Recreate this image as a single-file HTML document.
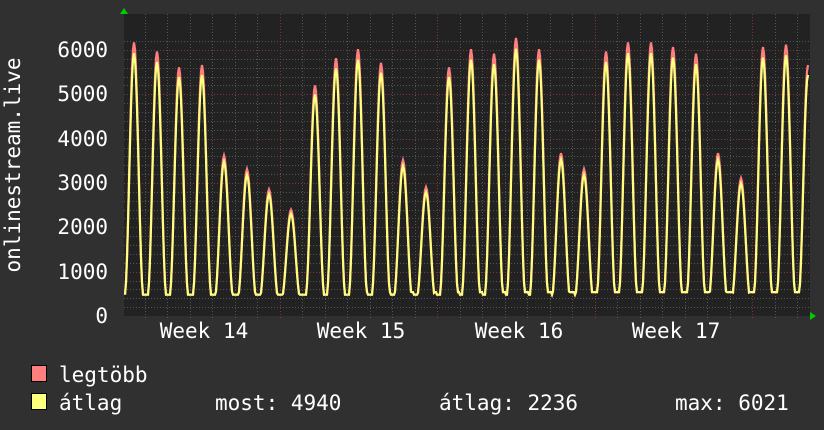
<!DOCTYPE html>
<html><head><meta charset="utf-8"><style>
html,body{margin:0;padding:0;background:#303030;}
svg{display:block}
text{font-family:"DejaVu Sans Mono","Liberation Mono",monospace;font-size:21px;fill:#fff}
</style></head><body>
<svg id="s" width="824" height="430" xmlns="http://www.w3.org/2000/svg">
<rect width="824" height="430" fill="#303030"/>
<rect x="124" y="14" width="686" height="302" fill="#222"/>
<g id="grid"></g>
<g id="lines"></g>
<polygon points="120,14 128,14 124,8" fill="#0c0"/>
<polygon points="810,312 810,320 816,316" fill="#0c0"/>
<g text-anchor="end">
<text x="108" y="57">6000</text>
<text x="108" y="101">5000</text>
<text x="108" y="146">4000</text>
<text x="108" y="190">3000</text>
<text x="108" y="234">2000</text>
<text x="108" y="279">1000</text>
<text x="108" y="323">0</text>
</g>
<text transform="translate(20,165) rotate(-90)" text-anchor="middle">onlinestream.live</text>
<g text-anchor="middle">
<text x="204" y="338">Week 14</text>
<text x="361" y="338">Week 15</text>
<text x="519" y="338">Week 16</text>
<text x="676" y="338">Week 17</text>
</g>
<rect x="31.5" y="365.5" width="15" height="16" fill="#ff7f7f" stroke="#000"/>
<rect x="31.5" y="393.5" width="15" height="16" fill="#ffff7f" stroke="#000"/>
<text x="59" y="382">legtöbb</text>
<text x="59" y="410">átlag</text>
<text x="215" y="410">most: 4940</text>
<text x="439" y="410">átlag: 2236</text>
<text x="675" y="410">max: 6021</text>
</svg>
<script>
var NS="http://www.w3.org/2000/svg";
function el(p,t,a){var e=document.createElementNS(NS,t);for(var k in a)e.setAttribute(k,a[k]);p.appendChild(e);return e;}
var g=document.getElementById('grid');
var Y=function(v){return 316-v*0.04433;};
for(var v=200;v<=6200;v+=200){var y=Math.round(Y(v))+0.5;var maj=v%1000==0;
el(g,'line',{x1:124,x2:810,y1:y,y2:y,stroke:maj?'#7a3a3a':'#555','stroke-dasharray':'1,2'});}
for(var x=752-22.5*28;x<810;x+=22.5){if(x<124)continue;var xx=Math.round(x)+0.5;
var maj=[279.5,437,594.5,752].some(function(b){return Math.abs(b-x)<1;});
el(g,'line',{x1:xx,x2:xx,y1:14,y2:318,stroke:maj?'#7a3a3a':'#555','stroke-dasharray':'1,2'});}
var P=[[134,6050],[157,5850],[179,5500],[202,5550],[224,3550],[247,3250],[269,2800],[291,2350],[315,5100],[336,5700],[358,5900],[381,5600],[403,3450],[426,2850],[449,5500],[471,5900],[494,5800],[516,6150],[539,5900],[561,3600],[584,3250],[606,5850],[628,6050],[651,6050],[673,5950],[696,5800],[718,3600],[741,3050],[763,5950],[786,6000],[808,5550]];
function val(x,scale){var best=0;for(var i=0;i<P.length;i++){var d=Math.abs(x-P[i][0]);if(d<9){var f=(1+Math.cos(Math.PI*d/9))/2;var t=(P[i][1]<4000?420:520);var v=t+(P[i][1]*scale-t)*Math.pow(f,0.9);if(v>best)best=v;}}
if(best<450)best=(Math.round(x)%23<12)?480:540;return best;}
var l=document.getElementById('lines');
function line(scale,col){var pts=[];for(var x=125;x<=808;x++){pts.push(x+','+Y(val(x,scale)).toFixed(1));}
el(l,'polyline',{points:pts.join(' '),fill:'none',stroke:col,'stroke-width':2.2,'stroke-linejoin':'miter'});}
line(1.02,'#ff7f7f');line(0.98,'#ffff7f');
</script>
</body></html>
